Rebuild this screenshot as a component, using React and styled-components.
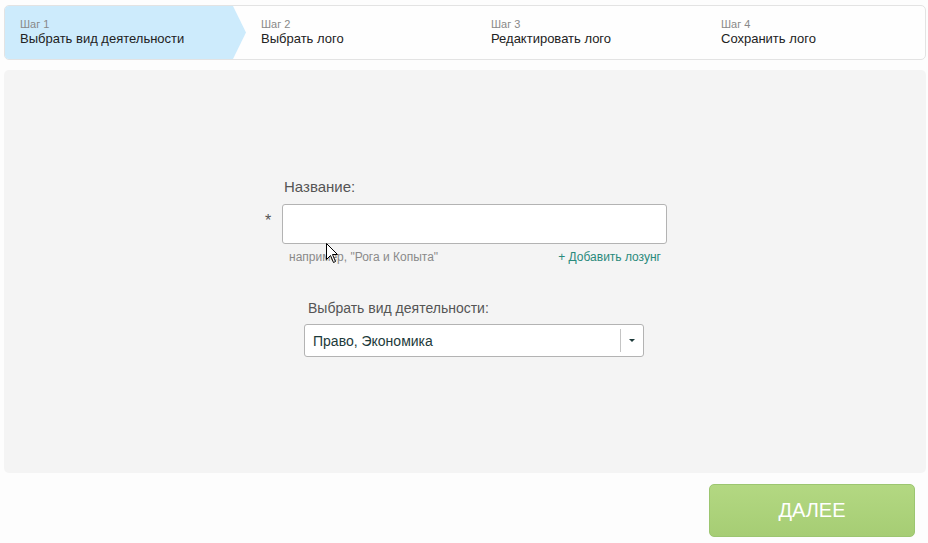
import React from "react";
import styled, { createGlobalStyle } from "styled-components";

const Global = createGlobalStyle`
  html, body { margin: 0; padding: 0; background: #fdfdfd; }
  body { font-family: "Liberation Sans", Arial, sans-serif; }
  * { box-sizing: border-box; }
`;

const Page = styled.div`
  width: 928px;
  height: 543px;
  padding: 5px 2px 0 4px;
  display: flex;
  flex-direction: column;
  overflow: hidden;
`;

const Stepper = styled.div`
  height: 55px;
  border: 1px solid #e3e3e3;
  border-radius: 5px;
  background: #fefefe;
  display: grid;
  grid-template-columns: repeat(4, 230px);
  overflow: hidden;
`;

const Step = styled.div`
  position: relative;
  padding-left: ${(p) => (p.$first ? 15 : 26)}px;
  display: flex;
  flex-direction: column;
  justify-content: center;
  padding-bottom: 2px;
  &::before {
    content: "";
    display: ${(p) => (p.$active ? "block" : "none")};
    position: absolute;
    left: 0;
    top: 0;
    bottom: 0;
    width: 241px;
    background: #cdebfc;
    clip-path: polygon(0 0, 228px 0, 100% 50%, 228px 100%, 0 100%);
  }
`;

const StepNum = styled.span`
  position: relative;
  font-size: 11px;
  line-height: 14px;
  color: #888;
`;

const StepTitle = styled.span`
  position: relative;
  font-size: 13px;
  line-height: 16px;
  color: #222;
`;

const Panel = styled.div`
  margin-top: 10px;
  height: 403px;
  background: #f4f4f4;
  border-radius: 5px;
  display: flex;
  justify-content: center;
  padding: 108px 0 0 0;
`;

const Form = styled.div`
  position: relative;
  width: 404px;
  display: flex;
  flex-direction: column;
`;

const FieldLabel = styled.div`
  margin-left: ${(p) => p.$indent}px;
  font-size: ${(p) => p.$size}px;
  line-height: 18px;
  color: #555;
`;

const InputRow = styled.div`
  display: flex;
  align-items: flex-start;
  margin-top: 8px;
`;

const Star = styled.span`
  width: 19px;
  padding-left: 2px;
  padding-top: 8px;
  font-size: 16px;
  color: #555;
`;

const Input = styled.div`
  width: 385px;
  height: 40px;
  background: #fff;
  border: 1px solid #b3b3b3;
  border-radius: 3px;
`;

const HintRow = styled.div`
  margin-left: 19px;
  padding: 6px 6px 0 7px;
  display: flex;
  justify-content: space-between;
  font-size: 12px;
  line-height: 15px;
`;

const Hint = styled.span`
  color: #8a8a8a;
`;

const AddLink = styled.span`
  color: #2a8a7c;
`;

const SelectBlock = styled.div`
  margin: 34px 0 0 41px;
  width: 340px;
  display: flex;
  flex-direction: column;
`;

const Select = styled.div`
  margin-top: 7px;
  height: 33px;
  background: #fff;
  border: 1px solid #b3b3b3;
  border-radius: 3px;
  display: flex;
  align-items: center;
`;

const SelectValue = styled.span`
  flex: 1;
  padding-left: 8px;
  font-size: 14px;
  color: #1d3a3a;
`;

const Caret = styled.span`
  width: 23px;
  height: 23px;
  border-left: 1px solid #c4c4c4;
  display: flex;
  align-items: center;
  justify-content: center;
  &::after {
    content: "";
    border-left: 3px solid transparent;
    border-right: 3px solid transparent;
    border-top: 3px solid #1d3a3a;
  }
`;

const Footer = styled.div`
  display: flex;
  justify-content: flex-end;
  padding: 11px 11px 0 0;
`;

const NextButton = styled.button`
  width: 206px;
  height: 53px;
  border: 1px solid #9cc670;
  border-radius: 5px;
  background: linear-gradient(#b3d882, #a6cd74);
  color: #fff;
  font-family: "Liberation Sans", Arial, sans-serif;
  font-size: 20px;
  padding: 0;
`;

const Cursor = styled.svg`
  position: absolute;
  left: 63px;
  top: 65px;
`;

export default function App() {
  const steps = [
    ["Шаг 1", "Выбрать вид деятельности"],
    ["Шаг 2", "Выбрать лого"],
    ["Шаг 3", "Редактировать лого"],
    ["Шаг 4", "Сохранить лого"],
  ];
  return (
    <>
      <Global />
      <Page>
        <Stepper>
          {steps.map(([n, t], i) => (
            <Step key={n} $first={i === 0} $active={i === 0}>
              <StepNum>{n}</StepNum>
              <StepTitle>{t}</StepTitle>
            </Step>
          ))}
        </Stepper>
        <Panel>
          <Form>
            <FieldLabel $indent={21} $size={15}>Название:</FieldLabel>
            <InputRow>
              <Star>*</Star>
              <Input />
            </InputRow>
            <HintRow>
              <Hint>например, "Рога и Копыта"</Hint>
              <AddLink>+ Добавить лозунг</AddLink>
            </HintRow>
            <SelectBlock>
              <FieldLabel $indent={4} $size={14}>Выбрать вид деятельности:</FieldLabel>
              <Select>
                <SelectValue>Право, Экономика</SelectValue>
                <Caret />
              </Select>
            </SelectBlock>
            <Cursor width="13" height="21" viewBox="0 0 13 21">
              <path d="M0.5 0.5 L0.5 16.5 L4.5 12.5 L7.5 19.5 L9.5 18.5 L6.5 11.5 L11.5 11.5 Z" fill="#fff" stroke="#000" strokeWidth="1" />
            </Cursor>
          </Form>
        </Panel>
        <Footer>
          <NextButton>ДАЛЕЕ</NextButton>
        </Footer>
      </Page>
    </>
  );
}
